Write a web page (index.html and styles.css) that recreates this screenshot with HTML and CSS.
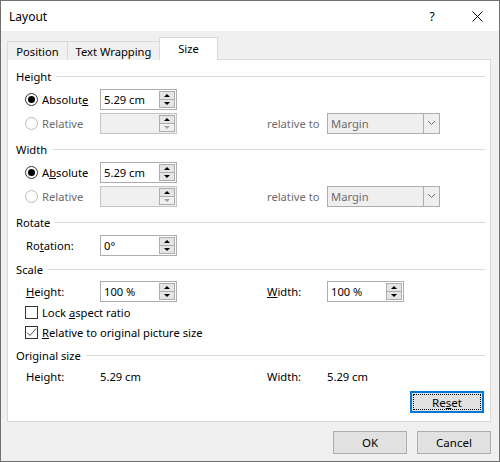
FILE: index.html
```html
<!DOCTYPE html>
<html lang="en">
<head>
<meta charset="UTF-8">
<title>Layout</title>
<link rel="stylesheet" href="styles.css">
</head>
<body>

<div class="dialog">
    <!-- title bar -->
    <div class="titlebar">
        <span class="title">Layout</span>
        <span class="help">?</span>
        <span class="close">
            <svg width="11" height="11" viewBox="0 0 11 11"><path d="M0.5 0.5 L10.5 10.5 M10.5 0.5 L0.5 10.5" stroke="#000" stroke-width="1" fill="none"/></svg>
        </span>
    </div>

    <div class="body">
        <div class="tabs">
            <div class="tab tab-position">Position</div>
            <div class="tab tab-wrap">Text Wrapping</div>
            <div class="tab tab-size active">Size</div>
        </div>

        <div class="panel">
            <!-- Height -->
            <div class="group-head first"><span>Height</span><i class="rule"></i></div>
            <div class="row">
                <label class="opt"><span class="radio checked"></span><span>Absolut<u>e</u></span></label>
                <div class="spin"><span class="val">5.29 cm</span><span class="arrows"><b class="up"></b><b class="down"></b></span></div>
            </div>
            <div class="row">
                <label class="opt disabled"><span class="radio"></span><span>Relative</span></label>
                <div class="spin off"><span class="val"></span><span class="arrows"><b class="up"></b><b class="down"></b></span></div>
                <span></span>
                <span class="muted">relative to</span>
                <div class="select"><span class="val">Margin</span><span class="drop"><svg width="9" height="6" viewBox="0 0 9 6"><path d="M1 1 L4.5 4.5 L8 1" stroke="#6d6d6d" fill="none"/></svg></span></div>
            </div>

            <!-- Width -->
            <div class="group-head"><span>Width</span><i class="rule"></i></div>
            <div class="row">
                <label class="opt"><span class="radio checked"></span><span>A<u>b</u>solute</span></label>
                <div class="spin"><span class="val">5.29 cm</span><span class="arrows"><b class="up"></b><b class="down"></b></span></div>
            </div>
            <div class="row">
                <label class="opt disabled"><span class="radio"></span><span>Relative</span></label>
                <div class="spin off"><span class="val"></span><span class="arrows"><b class="up"></b><b class="down"></b></span></div>
                <span></span>
                <span class="muted">relative to</span>
                <div class="select"><span class="val">Margin</span><span class="drop"><svg width="9" height="6" viewBox="0 0 9 6"><path d="M1 1 L4.5 4.5 L8 1" stroke="#6d6d6d" fill="none"/></svg></span></div>
            </div>

            <!-- Rotate -->
            <div class="group-head"><span>Rotate</span><i class="rule"></i></div>
            <div class="row">
                <span class="lbl">Ro<u>t</u>ation:</span>
                <div class="spin"><span class="val">0°</span><span class="arrows"><b class="up"></b><b class="down"></b></span></div>
            </div>

            <!-- Scale -->
            <div class="group-head scale"><span>Scale</span><i class="rule"></i></div>
            <div class="row row-scale">
                <span class="lbl"><u>H</u>eight:</span>
                <div class="spin"><span class="val">100 %</span><span class="arrows"><b class="up"></b><b class="down"></b></span></div>
                <span></span>
                <span class="lbl-r"><u>W</u>idth:</span>
                <div class="spin"><span class="val">100 %</span><span class="arrows"><b class="up"></b><b class="down"></b></span></div>
            </div>
            <div class="check-row"><span class="check"></span><span>Lock <u>a</u>spect ratio</span></div>
            <div class="check-row"><span class="check on"><svg width="11" height="11" viewBox="0 0 11 11"><path d="M1 5.5 L4 8.5 L10 1.5" stroke="#555" stroke-width="1" fill="none"/></svg></span><span><u>R</u>elative to original picture size</span></div>

            <!-- Original size -->
            <div class="group-head orig"><span>Original size</span><i class="rule"></i></div>
            <div class="row row-orig">
                <span class="lbl">Height:</span>
                <span>5.29 cm</span>
                <span></span>
                <span class="lbl-r">Width:</span>
                <span>5.29 cm</span>
            </div>

            <div class="reset-wrap">
                <button class="btn btn-reset">Re<u>s</u>et</button>
            </div>
        </div>

        <div class="footer">
            <button class="btn">OK</button>
            <button class="btn">Cancel</button>
        </div>
    </div>
</div>

</body>
</html>
```

FILE: styles.css
```css
/* dialog frame */
body {
    margin: 0;
    background-color: #ffffff;
    font-family: "Noto Sans", "Open Sans", sans-serif;
    font-size: 11.2px;
    color: #000;
}

.dialog {
    width: 500px;
    height: 462px;
    box-sizing: border-box;
    border: 1px solid #707070;
    background-color: #f0f0f0;
    display: flex;
    flex-direction: column;
}

.titlebar {
    height: 30px;
    background-color: #ffffff;
    display: flex;
    align-items: center;
    padding-left: 8px;
    font-size: 12px;
}

.title {
    flex: 1;
}

.help {
    width: 10px;
    margin-right: 35px;
    text-align: center;
}

.close {
    display: flex;
    margin-right: 16px;
}

.body {
    flex: 1;
    padding: 7px 8px 0 6px;
}

/* tabs */
.tabs {
    display: flex;
    align-items: flex-end;
    height: 22px;
    margin-bottom: -1px;
    position: relative;
    z-index: 1;
}

.tab {
    box-sizing: border-box;
    height: 19px;
    border: 1px solid #d9d9d9;
    border-bottom: none;
    background-color: #f0f0f0;
    display: flex;
    align-items: center;
    justify-content: center;
    margin-left: -1px;
}

.tab-position {
    width: 61px;
    margin-left: 0;
}

.tab-wrap {
    width: 93px;
}

.tab-size {
    width: 59px;
}

.tab.active {
    height: 23px;
    background-color: #ffffff;
    padding-bottom: 2px;
}

.panel {
    box-sizing: border-box;
    height: 363px;
    border: 1px solid #d9d9d9;
    background-color: #ffffff;
    padding: 0 5px 0 8px;
}

/* group headers */
.group-head {
    height: 20px;
    display: flex;
    align-items: center;
    margin-top: 4px;
    margin-bottom: 1px;
}

.group-head.first {
    margin-top: 6px;
}

.group-head.scale {
    margin-top: 2px;
}

.group-head.orig {
    margin-top: 3px;
}

.rule {
    flex: 1;
    height: 1px;
    background-color: #dcdcdc;
    margin-left: 5px;
}

/* rows */
.row {
    height: 24px;
    display: grid;
    grid-template-columns: 75px 77px 90px 60px 113px;
    align-items: center;
    margin-left: 9px;
}

.row-scale {
    height: 22px;
    margin-top: 1px;
}

.row-orig {
    height: 20px;
}

.lbl {
    padding-left: 1px;
}

.muted,
.opt.disabled {
    color: #6d6d6d;
}

.opt {
    display: flex;
    align-items: center;
}

.radio {
    box-sizing: border-box;
    width: 13px;
    height: 13px;
    border: 1px solid #333;
    border-radius: 50%;
    margin-right: 4px;
    display: flex;
    align-items: center;
    justify-content: center;
}

.radio.checked::after {
    content: "";
    width: 7px;
    height: 7px;
    border-radius: 50%;
    background-color: #000;
}

.opt.disabled .radio {
    border-color: #bcbcbc;
}

/* spin boxes */
.spin {
    box-sizing: border-box;
    width: 77px;
    height: 21px;
    border: 1px solid #adadad;
    background-color: #ffffff;
    display: flex;
    align-items: center;
}

.spin.off {
    background-color: #f0f0f0;
    border-color: #c4c4c4;
}

.spin .val {
    flex: 1;
    padding-left: 3px;
}

.arrows {
    display: flex;
    flex-direction: column;
    width: 16px;
    height: 17px;
    margin-right: 1px;
}

.arrows b {
    flex: 1;
    box-sizing: border-box;
    border: 1px solid #adadad;
    background-color: #e5e5e5;
    display: flex;
    align-items: center;
    justify-content: center;
}

.arrows b + b {
    border-top: none;
}

.arrows b::after {
    content: "";
    width: 0;
    height: 0;
    border-left: 3px solid transparent;
    border-right: 3px solid transparent;
}

.arrows .up::after {
    border-bottom: 3px solid #000;
}

.arrows .down::after {
    border-top: 3px solid #000;
}

.spin.off .arrows .down::after {
    border-top-color: #a0a0a0;
}

.spin.off .arrows .down {
    background-color: #f0f0f0;
}

/* select */
.select {
    box-sizing: border-box;
    width: 113px;
    height: 21px;
    border: 1px solid #adadad;
    background-color: #efefef;
    display: flex;
    align-items: center;
    color: #6d6d6d;
}

.select .val {
    flex: 1;
    padding-left: 3px;
}

.drop {
    width: 15px;
    height: 19px;
    border-left: 1px solid #adadad;
    display: flex;
    align-items: center;
    justify-content: center;
}

/* check boxes */
.check-row {
    height: 20px;
    display: flex;
    align-items: center;
    margin-left: 9px;
}

.check {
    box-sizing: border-box;
    width: 13px;
    height: 13px;
    border: 1px solid #333;
    margin-right: 4px;
    display: flex;
    align-items: center;
    justify-content: center;
}

/* buttons */
.btn {
    box-sizing: border-box;
    width: 74px;
    height: 23px;
    border: 1px solid #adadad;
    background-color: #e1e1e1;
    font-family: inherit;
    font-size: 11.5px;
    color: #000;
    padding: 0;
}

.reset-wrap {
    display: flex;
    justify-content: flex-end;
    margin-top: 5px;
    margin-right: 1px;
}

.btn-reset {
    height: 22px;
    border: 2px solid #0078d7;
    outline: 1px dotted #000;
    outline-offset: -4px;
}

.footer {
    display: flex;
    justify-content: flex-end;
    gap: 10px;
    padding-top: 9px;
    padding-right: 0;
}
```
